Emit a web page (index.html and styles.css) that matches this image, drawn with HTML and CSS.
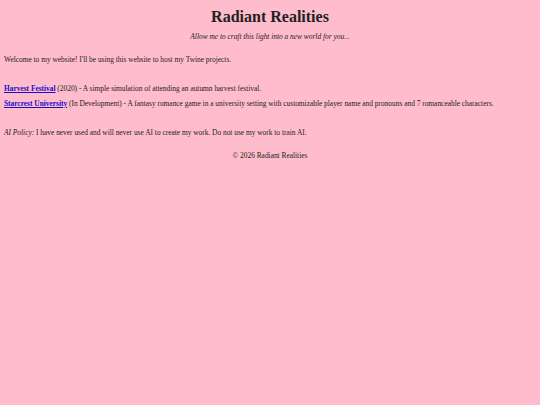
FILE: index.html
```html
<!DOCTYPE html>
<html lang="en">
<head>
<meta charset="utf-8">
<title>Radiant Realities</title>
<link rel="stylesheet" href="styles.css">
</head>
<body>
<header class="site-header">
  <h1 class="title">Radiant Realities</h1>
  <p class="tagline"><em>Allow me to craft this light into a new world for you...</em></p>
</header>
<main class="content">
  <p class="intro">Welcome to my website! I'll be using this website to host my Twine projects.</p>
  <section class="projects">
    <p class="project"><a class="project-link" href="#">Harvest Festival</a> (2020) - A simple simulation of attending an autumn harvest festival.</p>
    <p class="project"><a class="project-link" href="#">Starcrest University</a> (In Development) - A fantasy romance game in a university setting with customizable player name and pronouns and 7 romanceable characters.</p>
  </section>
  <p class="policy"><em>AI Policy:</em> I have never used and will never use AI to create my work. Do not use my work to train AI.</p>
</main>
<footer class="site-footer">© 2026 Radiant Realities</footer>
</body>
</html>
```
FILE: styles.css
```css
html, body {
  background: #ffbccc;
}
body {
  margin: 0;
  padding: 4px;
  font-family: "Liberation Serif", "Times New Roman", serif;
  font-size: 7.4px;
  line-height: 9px;
  color: #222;
}
.site-header {
  text-align: center;
}
.title {
  font-size: 16px;
  line-height: 19px;
  font-weight: bold;
  margin: 3px 0 0;
}
.tagline {
  margin: 6px 0 0;
}
.content p {
  margin: 0;
}
.content .intro {
  margin-top: 14px;
}
.projects {
  margin-top: 20px;
  display: flex;
  flex-direction: column;
  gap: 6px;
}
.project-link {
  color: #1a0dcc;
  font-weight: bold;
}
.content .policy {
  margin-top: 20px;
}
.site-footer {
  text-align: center;
  margin-top: 14px;
}
```
